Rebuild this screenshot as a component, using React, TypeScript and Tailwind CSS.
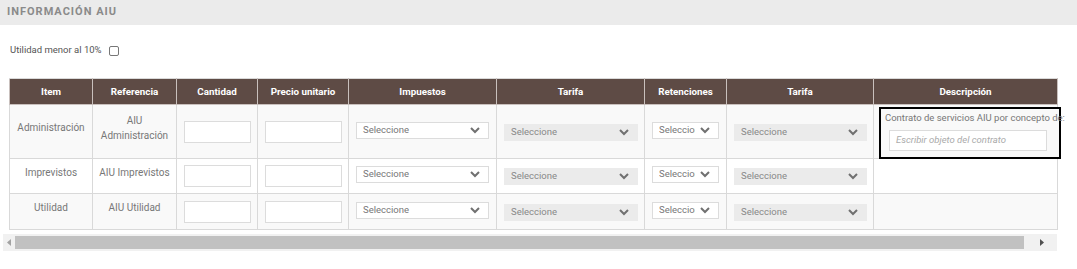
const Chevron = () => (
	<svg width="10" height="7" viewBox="0 0 10 7" className="shrink-0">
		<polyline points="1,1 5,5 9,1" fill="none" stroke="#707070" strokeWidth="2" />
	</svg>
);

const WhiteSelect = ({ narrow }: { narrow?: boolean }) => (
	<div className="flex items-center justify-between h-[17px] mb-[3px] bg-white border border-[#dcdcdc] pl-[6px] pr-[8px]">
		<span className={narrow ? "w-[36px] overflow-hidden whitespace-nowrap text-[9.5px] text-[#777]" : "text-[9.5px] text-[#777]"}>
			Seleccione
		</span>
		<Chevron />
	</div>
);

const GraySelect = () => (
	<div className="flex items-center justify-between h-[17px] mt-[1px] bg-[#ebebeb] pl-[7px] pr-[9px]">
		<span className="text-[9.5px] text-[#888]">Seleccione</span>
		<Chevron />
	</div>
);

const Input = () => <div className="h-[22px] bg-white border border-[#dcdcdc]" />;

const rows = [
	{ item: "Administración", ref: ["AIU", "Administración"], h: "h-[54px]", bg: "bg-[#f9f9f9]", desc: true },
	{ item: "Imprevistos", ref: ["AIU Imprevistos"], h: "h-[35px]", bg: "bg-white", desc: false },
	{ item: "Utilidad", ref: ["AIU Utilidad"], h: "h-[36px]", bg: "bg-[#f9f9f9]", desc: false },
];

const headers = ["Item", "Referencia", "Cantidad", "Precio unitario", "Impuestos", "Tarifa", "Retenciones", "Tarifa", "Descripción"];

const App = () => {
	const td = "border border-[#d9d9d9] px-[7px] align-middle";
	return (
		<div className="w-[1077px] h-[269px] bg-white font-['Roboto',sans-serif]">
			<div className="h-[25px] bg-[#ebebeb] flex items-center px-[7px]">
				<span className="text-[11px] font-bold tracking-[1px] text-[#8a8a8a]">INFORMACIÓN AIU</span>
			</div>
			<div className="flex items-center gap-[7px] pl-[10px] pt-[13px] h-[53px] pb-[15px]">
				<span className="text-[9.5px] text-[#555]">Utilidad menor al 10%</span>
				<span className="w-[10px] h-[10px] border border-[#777] rounded-[2px] bg-white" />
			</div>
			<div className="ml-[3px] w-[1054px]">
				<div className="pl-[6px]">
					<table className="table-fixed border-collapse w-[1048px] text-[10px] leading-[1.55]">
						<colgroup>
							<col className="w-[83px]" />
							<col className="w-[84px]" />
							<col className="w-[81px]" />
							<col className="w-[91px]" />
							<col className="w-[148px]" />
							<col className="w-[148px]" />
							<col className="w-[82px]" />
							<col className="w-[147px]" />
							<col className="w-[184px]" />
						</colgroup>
						<thead>
							<tr className="h-[26px] bg-[#5e4b45]">
								{headers.map((h, i) => (
									<th key={i} className="border border-[#c9c0bd] border-t-[#d9d9d9] text-white font-bold text-[9.8px] text-center align-middle">
										{h}
									</th>
								))}
							</tr>
						</thead>
						<tbody>
							{rows.map((r) => (
								<tr key={r.item} className={`${r.h} ${r.bg}`}>
									<td className="border border-[#d9d9d9] px-[2px] align-middle text-center text-[#777] pb-[7px] whitespace-nowrap">{r.item}</td>
									<td className="border border-[#d9d9d9] px-[2px] align-middle text-center text-[#777] pb-[7px] whitespace-nowrap">
										{r.ref.map((l) => (
											<div key={l}>{l}</div>
										))}
									</td>
									<td className={`${td} pr-[6px]`}>
										<Input />
									</td>
									<td className={`${td} pr-[6px]`}>
										<Input />
									</td>
									<td className={td}>
										<WhiteSelect />
									</td>
									<td className={`${td} pr-[6px]`}>
										<GraySelect />
									</td>
									<td className={td}>
										<WhiteSelect narrow />
									</td>
									<td className={`${td} pr-[6px]`}>
										<GraySelect />
									</td>
									<td className={`${td} relative p-0`}>
										{r.desc && (
											<div className="absolute left-[5px] top-[2px] right-[-4px] bottom-[-1px] border-2 border-black bg-[#f9f9f9] z-10 pl-[4px] pt-[2px]">
												<div className="text-[9.5px] text-[#777] whitespace-nowrap">Contrato de servicios AIU por concepto de:</div>
												<div className="mt-[4px] ml-[4px] w-[158px] h-[21px] bg-white border border-[#dcdcdc] flex items-center pl-[6px]">
													<span className="italic text-[9.5px] text-[#aaa]">Escribir objeto del contrato</span>
												</div>
											</div>
										)}
									</td>
								</tr>
							))}
						</tbody>
					</table>
				</div>
				<div className="mt-[4px] h-[17px] bg-[#f1f1f1] flex items-center">
					<div className="w-[12px] flex justify-center">
						<svg width="4" height="7" viewBox="0 0 4 7">
							<polygon points="4,0 0,3.5 4,7" fill="#a3a3a3" />
						</svg>
					</div>
					<div className="w-[1009px] h-[13px] bg-[#c1c1c1]" />
					<div className="flex-1 flex justify-center pl-[2px]">
						<svg width="4" height="7" viewBox="0 0 4 7">
							<polygon points="0,0 4,3.5 0,7" fill="#505050" />
						</svg>
					</div>
				</div>
			</div>
		</div>
	);
};

export default App;
